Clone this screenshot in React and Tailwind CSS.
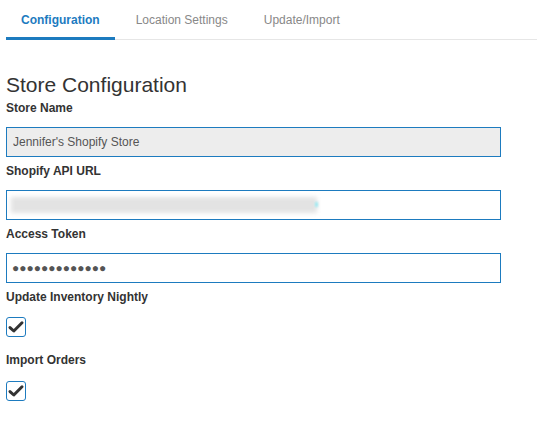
import React from "react";

const font = { fontFamily: '"Liberation Sans", Arial, sans-serif' };

function Label({ children, className = "" }) {
  return (
    <div className={`text-[12px] leading-[16px] font-bold text-[#333] ${className}`}>
      {children}
    </div>
  );
}

function Check({ className = "" }) {
  return (
    <div
      className={`w-[20px] h-[20px] rounded-[3px] border border-[#1d7bbf] bg-white flex items-center justify-center ${className}`}
    >
      <svg width="18" height="18" viewBox="0 0 18 18">
        <path
          d="M3 9.6 L6.8 13 L15 4.8"
          fill="none"
          stroke="#333"
          strokeWidth="3"
          strokeLinecap="round"
          strokeLinejoin="round"
        />
      </svg>
    </div>
  );
}

export default function App() {
  const tabs = ["Configuration", "Location Settings", "Update/Import"];
  return (
    <div className="w-[537px] h-[427px] bg-white overflow-hidden pl-[6px]" style={font}>
      <div className="flex gap-[6px] border-b border-[#e6e6e6]">
        {tabs.map((t, i) => (
          <div
            key={t}
            className={
              i === 0
                ? "px-[15px] pt-[12px] pb-[9px] -mb-px border-b-[3px] border-[#1d7bbf] text-[12px] leading-[16px] font-bold text-[#1d7bbf]"
                : "px-[15px] pt-[12px] pb-[9px] -mb-px border-b-[3px] border-transparent text-[12px] leading-[16px] text-[#888]"
            }
          >
            {t}
          </div>
        ))}
      </div>

      <div className="mt-[33px] text-[21px] leading-[23px] text-[#333]">Store Configuration</div>

      <Label className="mt-[4px] mb-[11px]">Store Name</Label>
      <input
        readOnly
        value="Jennifer's Shopify Store"
        className="block w-[495px] h-[30px] border border-[#1d7bbf] bg-[#ededed] px-[6px] text-[12px] text-[#555] outline-none"
        style={font}
      />

      <Label className="mt-[6px] mb-[11px]">Shopify API URL</Label>
      <div className="w-[495px] h-[30px] border border-[#1d7bbf] bg-white relative overflow-hidden">
        <div className="absolute left-[4px] top-[6px] w-[306px] h-[16px] bg-[#e3e3e3] blur-[2px]" />
        <div className="absolute left-[308px] top-[11px] w-[3px] h-[5px] bg-[#9ee8f0] blur-[1px]" />
      </div>

      <Label className="mt-[6px] mb-[11px]">Access Token</Label>
      <input
        readOnly
        value="●●●●●●●●●●●●●"
        className="block w-[495px] h-[30px] border border-[#1d7bbf] bg-white px-[5px] text-[12px] text-[#555] outline-none"
        style={font}
      />

      <Label className="mt-[6px]">Update Inventory Nightly</Label>
      <Check className="mt-[12px]" />

      <Label className="mt-[15px]">Import Orders</Label>
      <Check className="mt-[13px]" />
    </div>
  );
}
